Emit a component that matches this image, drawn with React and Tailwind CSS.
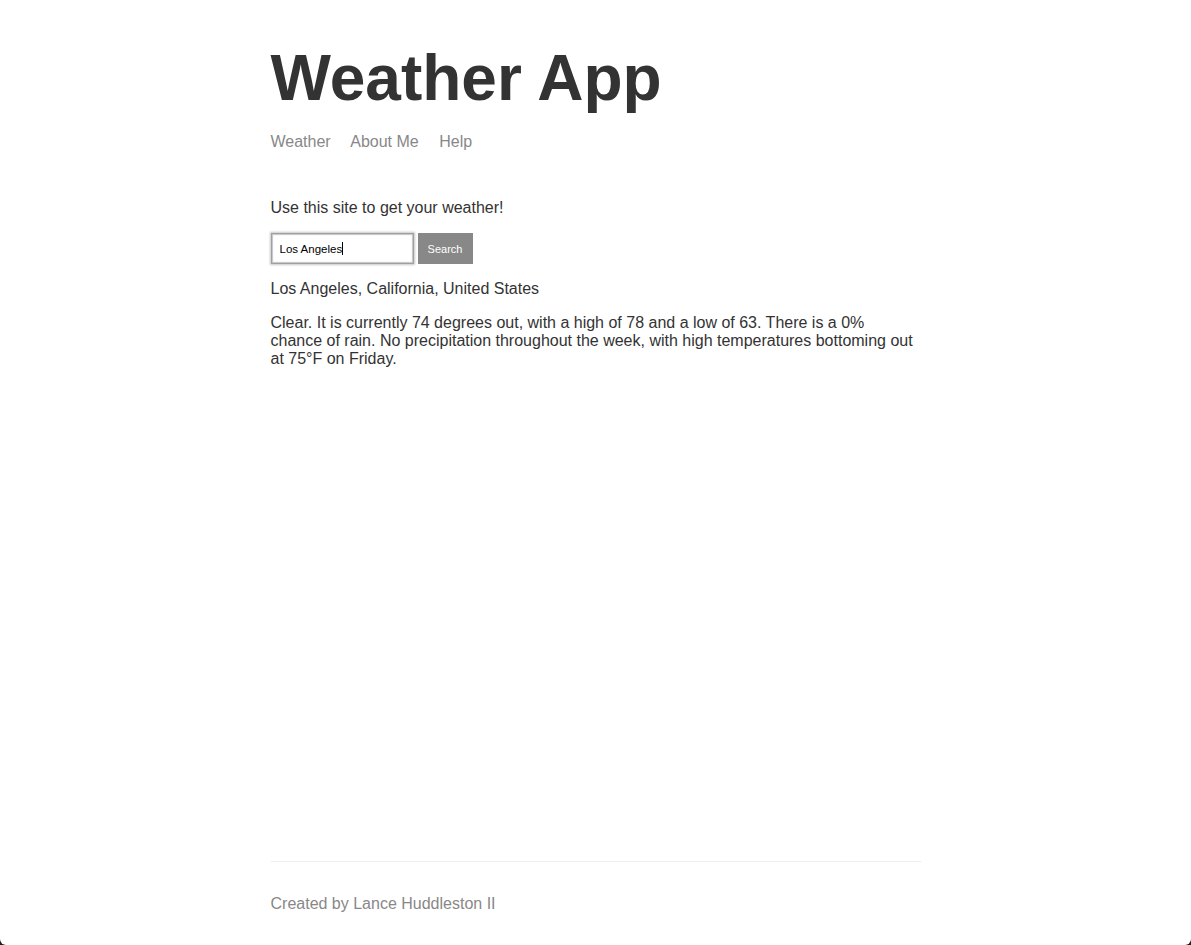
import React, { useState } from 'react';

function App() {
  const [location] = useState('Los Angeles');

  return (
    <div className="bg-[#1e1e1e]">
      <div className="bg-white rounded-b-[6px]">
        <div className="min-h-screen flex flex-col max-w-[650px] mx-auto px-4 box-content text-[#333333] font-['Liberation_Sans',Arial,sans-serif]">
          {/* Header */}
          <header>
            <h1 className="mt-[41px] text-[64px] leading-[74px] font-bold">Weather App</h1>
            <nav className="mt-[18px] text-[16px] leading-[18px]">
              <a href="#" className="text-[#888888] mr-4">Weather</a>{' '}
              <a href="#" className="text-[#888888] mr-4">About Me</a>{' '}
              <a href="#" className="text-[#888888] mr-4">Help</a>
            </nav>
          </header>

          {/* Main content */}
          <main className="flex-1 text-[16px] leading-[18px]">
            <p className="mt-[48px]">Use this site to get your weather!</p>
            <form className="mt-[16px] flex items-start gap-[4px]" onSubmit={(e) => e.preventDefault()}>
              <div className="w-[143px] h-[31px] bg-white border border-[#a0a0a0] shadow-[0_0_2px_1px_#c8c8c8,inset_0_0_1px_1px_#c4c4c4] pl-[8px] flex items-center text-[11.5px] text-black">
                {location}
                <span className="inline-block w-px h-[13px] bg-black"></span>
              </div>
              <button type="submit" className="w-[55px] h-[31px] bg-[#888888] border border-[#888888] text-white text-[11px]">
                Search
              </button>
            </form>
            <p className="mt-[16px]">Los Angeles, California, United States</p>
            <p className="mt-[16px] max-w-[645px]">
              Clear. It is currently 74 degrees out, with a high of 78 and a low of 63. There is a 0% chance of rain. No precipitation throughout the week, with high temperatures bottoming out at 75°F on Friday.
            </p>
          </main>

          {/* Footer */}
          <footer className="mt-4 border-t border-[#eeeeee] pt-[33px] pb-[32px] text-[#888888] text-[16px] leading-[18px]">
            <p>Created by Lance Huddleston II</p>
          </footer>
        </div>
      </div>
    </div>
  );
}

export default App;
